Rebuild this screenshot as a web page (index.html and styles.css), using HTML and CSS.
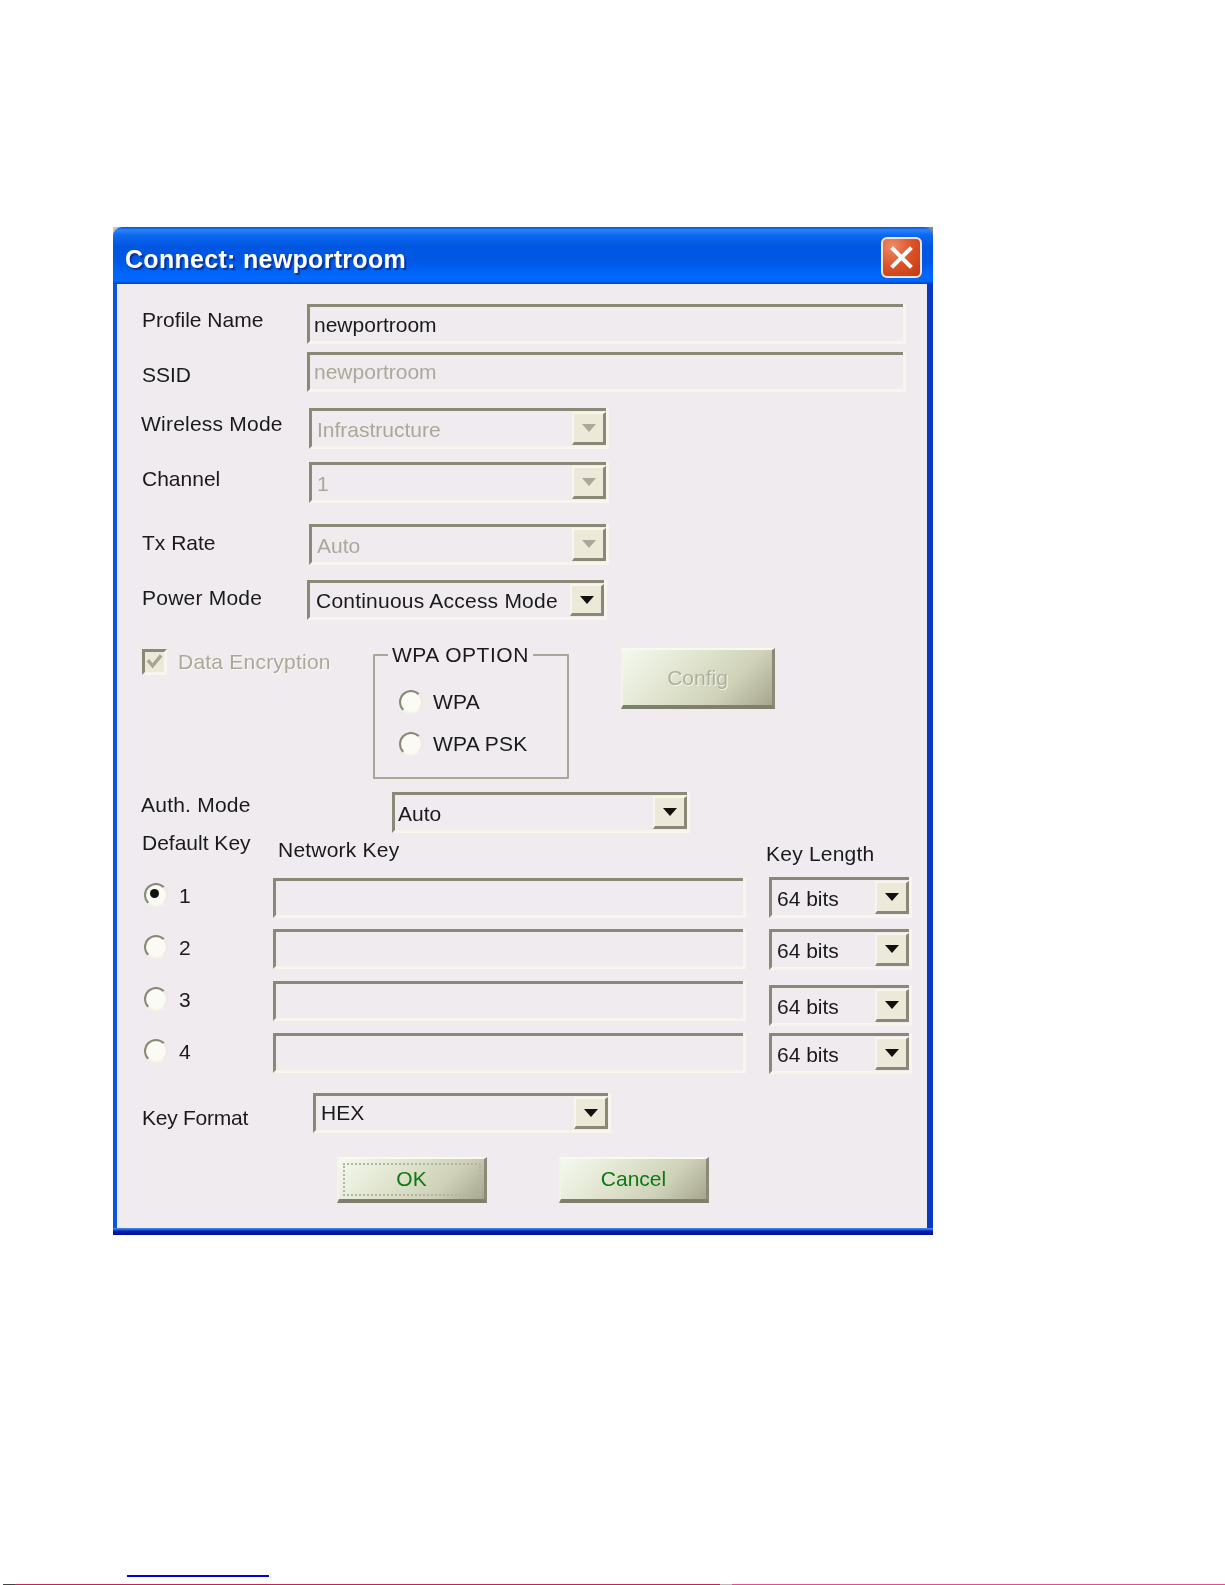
FILE: index.html
```html
<!DOCTYPE html>
<html lang="en">
<head>
<meta charset="utf-8">
<title>Connect: newportroom</title>
<link rel="stylesheet" href="styles.css">
</head>
<body>
<main class="page">
  <section class="window">
    <header class="titlebar">
      <h1 class="title">Connect: newportroom</h1>
      <div class="close">
        <svg width="23" height="23" viewBox="0 0 23 23"><path d="M3 3 L20 20 M20 3 L3 20" stroke="#fff" stroke-width="4" stroke-linecap="square"/></svg>
      </div>
    </header>
    <form class="dialog">
      <div class="row row-profile">
        <span class="label w165 y4">Profile Name</span>
        <div class="sunken field wide"><span class="value down">newportroom</span></div>
      </div>
      <div class="row row-ssid">
        <span class="label w165 y11">SSID</span>
        <div class="sunken field wide"><span class="value off">newportroom</span></div>
      </div>
      <div class="row row-wireless">
        <span class="label w167 y4 nudge track">Wireless Mode</span>
        <div class="sunken combo w300 h41"><span class="value off down">Infrastructure</span><span class="drop"><i class="arrow off"></i></span></div>
      </div>
      <div class="row row-channel">
        <span class="label w167 y5">Channel</span>
        <div class="sunken combo w300 h41"><span class="value off down">1</span><span class="drop"><i class="arrow off"></i></span></div>
      </div>
      <div class="row row-tx">
        <span class="label w167 y7">Tx Rate</span>
        <div class="sunken combo w300 h41"><span class="value off down">Auto</span><span class="drop"><i class="arrow off"></i></span></div>
      </div>
      <div class="row row-power">
        <span class="label w165 y6 track">Power Mode</span>
        <div class="sunken combo inset6 w300 h40"><span class="value down track">Continuous Access Mode</span><span class="drop"><i class="arrow"></i></span></div>
      </div>
      <div class="row row-security">
        <div class="encrypt">
          <span class="check"><svg width="20" height="20" viewBox="0 0 20 20"><path d="M3 8 L8 14 L17 3" fill="none" stroke="#a8a594" stroke-width="3.5"/></svg></span>
          <span class="label off-label track">Data Encryption</span>
        </div>
        <fieldset class="wpa">
          <legend class="legend">WPA OPTION</legend>
          <div class="radio-line"><span class="radio"></span><span class="label track">WPA</span></div>
          <div class="radio-line second"><span class="radio"></span><span class="label clip track">WPA PSK</span></div>
        </fieldset>
        <div class="btn btn-config"><span class="btn-text off-btn">Config</span></div>
      </div>
      <div class="row row-auth">
        <span class="label w251 y0 nudge track">Auth. Mode</span>
        <div class="sunken combo tight w298 h41"><span class="value down">Auto</span><span class="drop"><i class="arrow"></i></span></div>
      </div>
      <div class="row row-head">
        <span class="label w136">Default Key</span>
        <span class="label w488 y7 track">Network Key</span>
        <span class="label y11 track">Key Length</span>
      </div>
      <div class="key-row">
        <span class="radio radio-key on"></span><span class="label digit">1</span>
        <div class="sunken key-input y1"></div>
        <div class="sunken combo w143 h41"><span class="value down">64 bits</span><span class="drop"><i class="arrow"></i></span></div>
      </div>
      <div class="key-row">
        <span class="radio radio-key"></span><span class="label digit">2</span>
        <div class="sunken key-input"></div>
        <div class="sunken combo w143 h41"><span class="value down">64 bits</span><span class="drop"><i class="arrow"></i></span></div>
      </div>
      <div class="key-row">
        <span class="radio radio-key"></span><span class="label digit">3</span>
        <div class="sunken key-input"></div>
        <div class="sunken combo w143 h41 y4"><span class="value down">64 bits</span><span class="drop"><i class="arrow"></i></span></div>
      </div>
      <div class="key-row">
        <span class="radio radio-key"></span><span class="label digit">4</span>
        <div class="sunken key-input"></div>
        <div class="sunken combo w143 h41"><span class="value down">64 bits</span><span class="drop"><i class="arrow"></i></span></div>
      </div>
      <div class="row row-format">
        <span class="label w171 y13 squeeze">Key Format</span>
        <div class="sunken combo w298 h40"><span class="value">HEX</span><span class="drop"><i class="arrow"></i></span></div>
      </div>
      <div class="row row-actions">
        <div class="btn btn-action focus"><span class="btn-text">OK</span></div>
        <div class="btn btn-action"><span class="btn-text">Cancel</span></div>
      </div>
    </form>
    <div class="frame-bottom"></div>
  </section>
  <div class="rule-blue"></div>
  <div class="rule-page"><span class="rule-mark"></span><span class="rule-dark"></span><span class="rule-gap"></span><span class="rule-light"></span></div>
</main>
</body>
</html>
```

FILE: styles.css
```css
* { box-sizing: border-box; }
html, body { margin: 0; padding: 0; background: #fff; }
body { font-family: "Liberation Sans", Arial, sans-serif; font-size: 21px; line-height: 24px; color: #1a1a1a; }
.page { width: 1225px; height: 1585px; padding-top: 227px; overflow: hidden; }

.window { margin-left: 113px; width: 820px; height: 1008px; background: linear-gradient(90deg, #cfc8b0 50%, #85858c 50%); display: flex; flex-direction: column; }
.titlebar {
  height: 57px; padding: 10px 11px 0 12px; display: flex; justify-content: space-between; align-items: flex-start;
  border-radius: 9px 9px 0 0; filter: blur(.5px);
  background: linear-gradient(180deg, #0a4fd8 0, #2a84fa 5%, #0f68f0 14%, #0056e0 35%, #0058e6 62%, #0066fa 82%, #0068ff 94%, #0040c8 100%);
}
.title { margin: 7px 0 0; font-size: 25px; line-height: 30px; font-weight: 700; letter-spacing: .3px; color: #fff; text-shadow: 2px 2px 1px #0a3398; }
.close { width: 41px; height: 41px; display: flex; align-items: center; justify-content: center; border: 2px solid #f3e4df; border-radius: 6px; background: radial-gradient(circle at 25% 20%, #ee8a68 0, #dc5228 50%, #c03a10 100%); }

.dialog { flex: 1; padding-left: 25px; background: #efebef; border-left: 4px solid #0a55e2; border-right: 6px solid #0838c4; filter: blur(.6px); }
.frame-bottom { height: 7px; background: linear-gradient(180deg, #4a8cf0 0, #2060dc 25%, #0a1eac 45%, #00109c 100%); }

.row { display: flex; align-items: flex-start; }
.row-profile { margin-top: 20px; height: 40px; }
.row-ssid { margin-top: 8px; height: 40px; }
.row-wireless { margin-top: 16px; height: 41px; }
.row-channel { margin-top: 13px; height: 41px; }
.row-tx { margin-top: 21px; height: 41px; }
.row-power { margin-top: 15px; height: 40px; }
.row-security { margin-top: 23px; height: 136px; }
.row-auth { margin-top: 13px; height: 41px; }
.row-head { margin-top: -2px; height: 46px; }
.row-format { margin-top: 19px; height: 40px; }
.row-actions { margin-top: 24px; height: 46px; margin-left: 195px; gap: 72px; }

.label { display: block; white-space: nowrap; }
.track { letter-spacing: .22px; }
.squeeze { letter-spacing: -.25px; }
.w136 { width: 136px; flex: none; }
.w165 { width: 165px; flex: none; }
.w167 { width: 167px; flex: none; }
.w171 { width: 171px; flex: none; }
.w251 { width: 251px; flex: none; }
.w488 { width: 488px; flex: none; }
.y0 { margin-top: 1px; }
.y1 { margin-top: 1px; }
.y4 { margin-top: 4px; }
.y5 { margin-top: 5px; }
.y6 { margin-top: 6px; }
.y7 { margin-top: 7px; }
.y11 { margin-top: 11px; }
.y13 { margin-top: 13px; }
.nudge { margin-left: -1px; }
.w167.nudge { width: 168px; }
.w251.nudge { width: 251px; }

.sunken { flex: none; border-style: solid; border-width: 3px 0 3px 3px; border-color: #8b8878 transparent #f8f5ef #8b8878; background: #efebef; box-shadow: 3px 0 0 #f8f5ef; }
.field { height: 40px; display: flex; align-items: center; padding-left: 4px; }
.wide { width: 596px; }
.value { display: block; white-space: nowrap; }
.value.off { color: #aca899; }
.value.down { padding-top: 2px; }

.combo { display: flex; align-items: center; justify-content: space-between; padding: 0 0 0 5px; }
.combo.inset6 { padding-left: 6px; }
.combo.tight { padding-left: 3px; }
.h40 { height: 40px; }
.h41 { height: 41px; }
.w143 { width: 140px; }
.w298 { width: 295px; }
.w300 { width: 297px; }
.drop { flex: none; width: 34px; align-self: stretch; margin: 1px 0; display: flex; align-items: center; justify-content: center; background: #ece9d8; border-style: solid; border-width: 2px 3px 3px 2px; border-color: #f7f5ec #8b8878 #8b8878 #f7f5ec; }
.arrow { display: block; width: 0; height: 0; border-style: solid; border-width: 8px 7.5px 0; border-color: #111 transparent transparent; }
.arrow.off { border-top-color: #aca899; }

.encrypt { width: 231px; flex: none; display: flex; align-items: flex-start; gap: 11px; margin-top: 6px; }
.check { flex: none; width: 25px; height: 26px; display: flex; align-items: center; justify-content: center; border-style: solid; border-width: 3px; border-color: #8b8878 #f8f5ef #f8f5ef #8b8878; background: #ece9d8; }
.off-label { color: #aca899; text-shadow: 1px 1px 0 #fbf9f4; margin-top: 1px; }

.wpa { flex: none; width: 196px; height: 136px; margin: 0; padding: 0 0 0 24px; min-width: 0; border: 2px solid #a9a798; border-radius: 1px; }
.legend { margin-left: -11px; padding: 0 4px; line-height: 24px; white-space: nowrap; letter-spacing: .55px; }
.radio-line { display: flex; align-items: center; gap: 10px; margin-top: 23px; height: 24px; }
.radio-line.second { margin-top: 18px; }
.clip { width: 95px; overflow: hidden; }
.radio { flex: none; display: block; position: relative; width: 24px; height: 24px; border-radius: 50%; background: #fbfbf6; border: 2.5px solid; border-color: #8b8878 #efe9df #f8f3e8 #8b8878; }
.radio.on::after { content: ""; position: absolute; left: 4px; top: 4px; width: 9px; height: 9px; border-radius: 50%; background: #111; }

.key-row { display: flex; align-items: flex-start; height: 41px; margin-bottom: 11px; }
.radio-key { margin: 6px 0 0 2px; }
.digit { width: 94px; flex: none; margin: 7px 0 0 11px; }
.key-input { width: 470px; height: 40px; margin-right: 26px; }

.btn { flex: none; position: relative; display: flex; align-items: center; justify-content: center; border-style: solid; border-width: 2px 3px 4px 2px; border-color: #fbf8f0 #8a8a78 #7f7f6e #f4f3e8; background: linear-gradient(135deg, #f4f9ef 0, #e0e4ce 40%, #cfd2b8 70%, #a6a68e 100%); }
.btn-config { width: 154px; height: 61px; margin: 5px 0 0 52px; }
.btn-action { width: 150px; height: 46px; }
.btn-text { color: #0c7a14; }
.off-btn { color: #aeb1a0; text-shadow: 1px 1px 0 #f4f5ea; }
.focus::after { content: ""; position: absolute; inset: 4px 3px 3px 4px; border: 2px dotted #b4b4a4; pointer-events: none; }

.rule-blue { margin: 340px 0 0 127px; width: 142px; height: 2px; background: #0000e0; }
.rule-page { margin-top: 7px; height: 2px; display: flex; }
.rule-mark { margin-left: 3px; width: 12px; background: #444; }
.rule-dark { flex: 0 0 705px; background: #c6205a; }
.rule-gap { flex: 0 0 12px; background: #c4b4b8; }
.rule-light { flex: 1; background: #e84a90; }
```
